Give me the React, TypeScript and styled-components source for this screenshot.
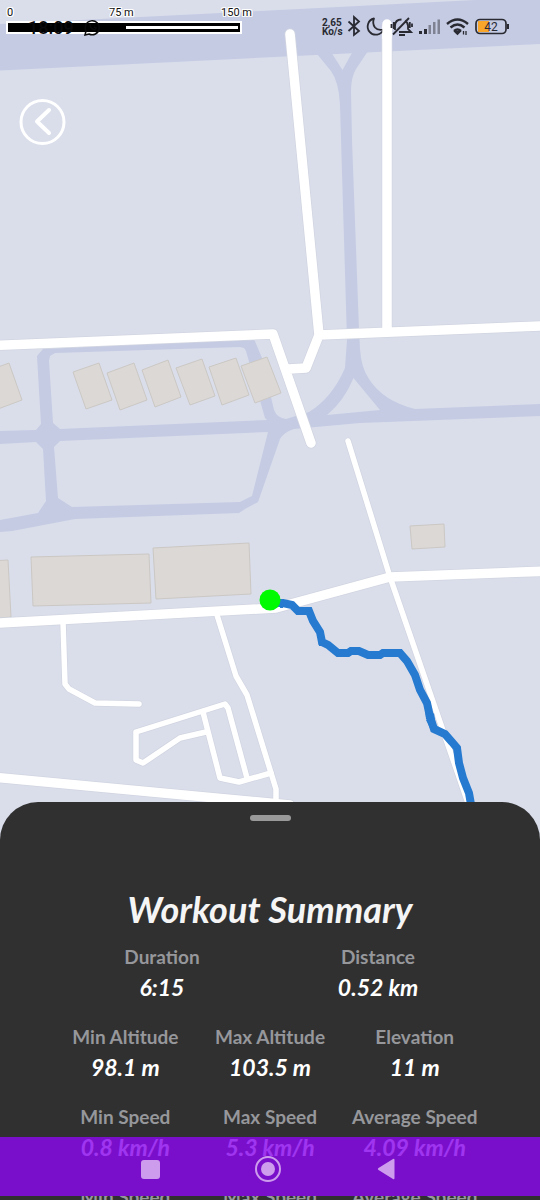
import React from "react";
import styled, { createGlobalStyle } from "styled-components";

const Global = createGlobalStyle`
  * { box-sizing: border-box; }
  html, body { margin: 0; background: #303030; }
  button { font: inherit; color: inherit; background: none; border: 0; padding: 0; cursor: pointer; }
`;

const Screen = styled.div`
  position: relative;
  display: flex;
  flex-direction: column;
  height: 100vh;
  overflow: hidden;
  background: #dadeeb;
  font-family: Roboto, "Liberation Sans", sans-serif;
`;

const MapCanvas = styled.svg`
  position: absolute;
  inset: 0;
  width: 100%;
  height: 100%;
`;

const Overlay = styled.main`
  position: relative;
  flex: 1;
  min-height: 0;
`;

const TopBar = styled.header`
  display: flex;
  justify-content: space-between;
  height: 98px;
  padding: 5px 30px 0 6px;
`;

const Scale = styled.div`
  position: relative;
  width: 248px;
  color: #111;
  font-size: 11px;
  line-height: 14px;
`;

const ScaleLabels = styled.div`
  display: grid;
  grid-template-columns: 102px 1fr auto;
  padding: 1px 2px 0 1px;
  text-shadow: 1px 0 #fff, -1px 0 #fff, 0 1px #fff, 0 -1px #fff, 1px 1px #fff, -1px -1px #fff, 1px -1px #fff, -1px 1px #fff;
`;

const ScaleBar = styled.div`
  display: flex;
  width: 236px;
  height: 13px;
  margin-top: 1px;
  border: 2px solid #fff;
  background: #000;
`;

const ScaleEmpty = styled.span`
  flex: 1;
  margin: 3px 2px 3px 118px;
  background: #fff;
`;

const Clock = styled.div`
  position: absolute;
  top: 14px;
  left: 22px;
  display: flex;
  align-items: center;
  gap: 10px;
  font-size: 18px;
  font-weight: 500;
  line-height: 16px;
  color: #0a0a0c;
`;

const Status = styled.div`
  display: flex;
  align-items: center;
  gap: 4px;
  height: 44px;
  color: #292a32;
`;

const Rate = styled.span`
  width: 20px;
  font-size: 10px;
  font-weight: 700;
  line-height: 9px;
  text-align: left;
  white-space: nowrap;
`;

const StatusIcons = styled.svg`
  display: block;
`;

const BackButton = styled.button`
  display: block;
  margin-left: 19px;
  width: 47px;
  height: 48px;
`;

const Sheet = styled.section`
  position: relative;
  flex: 0 0 398px;
  overflow: hidden;
  padding-top: 13px;
  border-radius: 38px 38px 0 0;
  background: #303030;
  text-align: center;
`;

const Handle = styled.button`
  display: block;
  width: 41px;
  height: 6px;
  margin: 0 auto 66px;
  border-radius: 3px;
  background: #999;
`;

const Title = styled.h1`
  margin: 0;
  color: #f5f5f5;
  font-family: Lato, sans-serif;
  font-size: 36px;
  font-style: italic;
  font-weight: 700;
  line-height: 44px;
  padding-bottom: 1px;
`;

const StatRow = styled.dl<{ $wide?: boolean; $peek?: boolean }>`
  display: flex;
  justify-content: center;
  height: 80px;
  margin: 0 auto;
  width: ${(p) => (p.$wide ? "80%" : "auto")};
  padding: ${(p) => (p.$wide ? "0" : "0 53px")};
  clip-path: ${(p) => (p.$peek ? "inset(24px 0 0 0)" : "none")};
`;

const Stat = styled.div`
  flex: 1;
  padding-top: 10px;
  white-space: nowrap;
`;

const Label = styled.dt`
  color: #96979b;
  font-family: Lato, sans-serif;
  font-size: 19px;
  font-weight: 700;
  line-height: 30px;
`;

const Value = styled.dd`
  margin: 0;
  color: #fff;
  font-family: Lato, sans-serif;
  font-size: 23px;
  font-style: italic;
  font-weight: 700;
  line-height: 30px;
`;

const NavBar = styled.nav`
  position: absolute;
  left: 0;
  right: 0;
  bottom: 4px;
  display: flex;
  justify-content: center;
  gap: 86px;
  height: 59px;
  padding: 5px 4px 0 0;
  background: rgba(138, 8, 237, 0.82);
`;

const NavButton = styled.button`
  width: 32px;
  height: 54px;
  display: grid;
  place-items: center;
`;

type Row = { wide?: boolean; peek?: boolean; items: string[][] };

const stats: Row[] = [
  { wide: true, items: [["Duration", "6:15"], ["Distance", "0.52 km"]] },
  { items: [["Min Altitude", "98.1 m"], ["Max Altitude", "103.5 m"], ["Elevation", "11 m"]] },
  { items: [["Min Speed", "0.8 km/h"], ["Max Speed", "5.3 km/h"], ["Average Speed", "4.09 km/h"]] },
  { peek: true, items: [["Min Speed", ""], ["Max Speed", ""], ["Average Speed", ""]] },
];

const buildings = [
  "-10,370 9,363 22,400 -10,412",
  "73,372 99,363 112,400 86,409",
  "107,373 134,363 147,400 120,410",
  "142,370 168,360 181,397 155,407",
  "176,368 202,359 215,396 190,405",
  "209,367 236,358 249,395 222,405",
  "241,366 267,357 281,393 255,403",
  "-10,561 8,560 11,617 -10,619",
  "31,557 149,554 151,603 33,606",
  "153,548 249,543 251,594 156,599",
  "410,526 444,524 445,547 412,549",
];

function CityMap() {
  return (
    <MapCanvas viewBox="0 0 540 1200" preserveAspectRatio="xMidYMin slice" role="img" aria-label="Workout route map">
      <rect width="540" height="1200" fill="#dadeeb" />
      <path d="M0 24 270 10.500 475 0H540V44L0 70.500Z" fill="#c5cbe3" />
      <path
        fill="#c5cbe3"
        d="M317 54 331 52 342.500 70 353 51 368 51 356 69Q351 77 351 92L352 140 359 330 360 349Q361 367 369 379 383 401 415 409L540 404V416L360 423 294 429Q284 432 280 439L258 502 245 509 239 513L75 519 12 531 0 532V520L38 513 46 501 43 449 36 442 0 444V431L36 430 41 424 37 356 43 349 254 339 262 358 274 410Q277 418 286 419L309 412Q332 398 345 368L347 340 340 105Q339 82 331 71Z"
      />
      <g fill="#dadeeb">
        <path d="M49 361 50 356 55 353 240 347 244 348 246 351 257 390 265 418 267 420 60 429 53 423Z" />
        <path d="M54 447 60 441 268 432 264 448 252 496 240 502 72 507 58 498Z" />
        <path d="M353.500 378 380 410 327 415Q344 401 353.500 378Z" />
      </g>
      <g fill="#dcd8d6" stroke="#cbc8c4" strokeWidth="1">
        {buildings.map((points) => <polygon key={points} points={points} />)}
      </g>
      <g fill="none" strokeLinecap="round" strokeLinejoin="round">
        {["#d1d5e1", "#fff"].map((color, i) => (
          <g key={color} stroke={color}>
            <g strokeWidth={i ? 9.5 : 11}>
              <path d="M-9 345.500 273 334 311 443M290 34 319 335 540 326M319 335 306 368 289 369M387 28V330" />
              <path d="M-9 623.500 276 608 390 577 550 571M-9 777 290 805" />
            </g>
            <g strokeWidth={i ? 5.5 : 7}>
              <path d="M348 441 390 577 468 803M63 622 65 684 69 689 95 703 139 704M217 615 236 676 247 695 276 789V810" />
              <path d="M136 732 225 704 228 708 247 778M203 712 220 778 239 782 271 773M136 732V760L143 763 180 738 206 732" />
            </g>
          </g>
        ))}
      </g>
      <path
        d="M273 603 283 603 292 605 298 611 309 611 313 621 320 632 322 642 328 645 338 653 348 653 351 651 359 651 368 655 380 655 383 653 400 653 407 661 415 675 420 690 427 703 430 717 434 729 445 734 452 742 457 748 459 763 463 778 469 793 472 810"
        fill="none"
        stroke="#267bd0"
        strokeWidth="8"
        strokeLinejoin="miter"
      />
      <g fill="#267bd0">
        <path d="M281 599H284L283 608H280ZM318 638H325V646H319ZM425 708H432V719H426ZM426 720 434 713 436 727 430 728Z" />
      </g>
      <circle cx="270" cy="600" r="10.500" fill="#00fb00" />
    </MapCanvas>
  );
}

export default function App() {
  return (
    <Screen>
      <Global />
      <CityMap />
      <Overlay>
        <TopBar>
          <Scale>
            <ScaleLabels><span>0</span><span>75 m</span><span>150 m</span></ScaleLabels>
            <ScaleBar><ScaleEmpty /></ScaleBar>
            <Clock>
              <span>18:09</span>
              <svg width="17" height="17" viewBox="0 0 17 17" fill="none" stroke="currentColor" strokeWidth="1.500"><path d="M1 16 2 12A7 7 0 1 1 5 15Z" /><path d="M6 5Q6 10 11 11L12 9 10 8" /></svg>
            </Clock>
          </Scale>
          <Status>
            <Rate>2,65<br />Ko/s</Rate>
            <StatusIcons width="164" height="24" viewBox="346 15 164 24" fill="none" stroke="currentColor" strokeWidth="1.800" aria-label="Bluetooth, do not disturb, silent, signal, Wi-Fi, battery">
              <path d="M348.500 21.500 359 31 354 35V17L359 21.500 348.500 31" />
              <path d="M374 18.500A8.200 8.200 0 1 0 383.500 29.500Q378 31 375 27.500 372 23.500 374 18.500Z" strokeLinejoin="round" />
              <path d="M387 24V37" stroke="#fff" strokeWidth="9.500" strokeLinecap="round" />
              <path d="M395 30V26Q395 19.500 401.500 19.500M405 20.500Q408 22.500 408 26V29L411 32H399M393 34.500 409 18M399 35H405M391.500 24V28M393.800 22V29M409.800 22V28M412 23.500V27" />
              <g fill="currentColor" stroke="none">
                <rect x="419" y="31" width="3" height="3" />
                <rect x="424" y="29" width="3" height="5" />
                <g opacity=".45">
                  <rect x="428.500" y="25" width="2.500" height="9" />
                  <rect x="433" y="22" width="2.500" height="12" />
                  <rect x="437.500" y="19.500" width="2.500" height="14.500" />
                </g>
              </g>
              <path d="M447 24Q457.500 15 468 24M450.500 27.500Q457.500 21.500 464.500 27.500M454 31Q457.500 28 461 31" strokeWidth="2.400" />
              <path d="M455.500 32 457.500 34 459.500 32Z" fill="currentColor" />
              <path d="M463.500 31V34.500M466 35V31" strokeWidth="1.300" />
              <rect x="478" y="21" width="11" height="11" fill="#f7a52b" stroke="none" />
              <rect x="476" y="19.500" width="30" height="14" rx="4" strokeWidth="1.700" />
              <path d="M508 24V29" strokeWidth="2" />
              <text x="491" y="31" fill="currentColor" stroke="none" fontSize="12" textAnchor="middle">42</text>
            </StatusIcons>
          </Status>
        </TopBar>
        <BackButton aria-label="Back">
          <svg width="47" height="48" viewBox="0 0 47 48" fill="none" stroke="#fff" strokeLinecap="round" strokeLinejoin="round"><circle cx="23.500" cy="24" r="21.500" strokeWidth="3" /><path d="M30 12 18 23.500 30 35" strokeWidth="4" /></svg>
        </BackButton>
      </Overlay>
      <Sheet>
        <Handle aria-label="Resize summary" />
        <Title>Workout Summary</Title>
        {stats.map((row, i) => (
          <StatRow key={i} $wide={row.wide} $peek={row.peek}>
            {row.items.map(([label, value]) => (
              <Stat key={label}>
                <Label>{label}</Label>
                <Value>{value}</Value>
              </Stat>
            ))}
          </StatRow>
        ))}
      </Sheet>
      <NavBar aria-label="System navigation">
        <NavButton aria-label="Recent apps"><svg width="19" height="19"><rect width="19" height="19" rx="3" fill="#cd9ced" /></svg></NavButton>
        <NavButton aria-label="Home"><svg width="26" height="26"><circle cx="13" cy="13" r="12" fill="none" stroke="#cd9ced" strokeWidth="2" /><circle cx="13" cy="13" r="7" fill="#cd9ced" /></svg></NavButton>
        <NavButton aria-label="Go back"><svg width="18" height="22"><path d="M1.500 10 16 1Q17.500 0 17.500 2V20Q17.500 22 16 21L1.500 12Q0 11 1.500 10Z" fill="#cd9ced" /></svg></NavButton>
      </NavBar>
    </Screen>
  );
}
